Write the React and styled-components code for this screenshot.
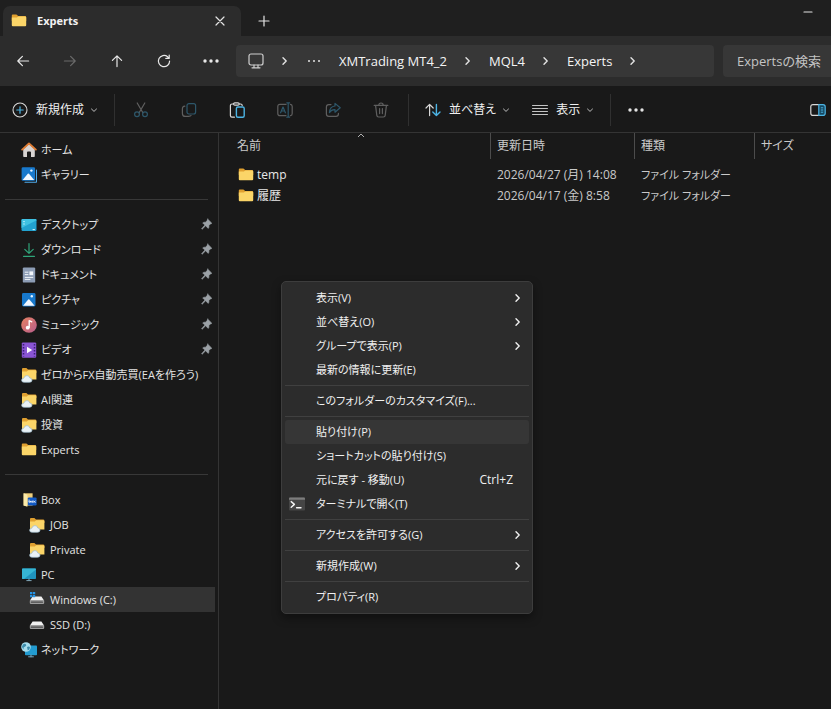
import { useState } from "react";
import styled, { createGlobalStyle, css } from "styled-components";

const GlobalStyle = createGlobalStyle`
  body {
    margin: 0;
    background-color: #191919;
    overflow: hidden;
  }
  button,
  input,
  table {
    font: inherit;
    color: inherit;
  }
`;

const Window = styled.div`
  position: relative;
  display: flex;
  flex-direction: column;
  min-height: 100vh;
  background-color: #191919;
  color: #e4e4e4;
  font-family: "Open Sans", "Noto Sans CJK JP", sans-serif;
  font-size: 12px;
  line-height: 16px;
  font-feature-settings: "palt";
`;

const PlainButton = styled.button`
  display: flex;
  align-items: center;
  justify-content: center;
  padding: 0;
  border: none;
  background: none;
  cursor: pointer;
  white-space: nowrap;
`;

/* Title bar */

const TitleBar = styled.header`
  display: flex;
  align-items: flex-end;
  height: 36px;
  padding-left: 3px;
  background-color: #1f1f1f;
`;

const Tab = styled.div`
  display: flex;
  align-items: center;
  width: 238px;
  height: 30px;
  padding: 0 13px 0 8px;
  box-sizing: border-box;
  border-radius: 7px 7px 0 0;
  background-color: #2c2c2c;
`;

const TabTitle = styled.span`
  flex: 1;
  padding-left: 10px;
  font-size: 11px;
  font-weight: 700;
  color: #f2f2f2;
`;

const NewTabButton = styled(PlainButton)`
  width: 46px;
  height: 30px;
`;

const MinimizeButton = styled(PlainButton)`
  width: 46px;
  height: 24px;
  margin-left: auto;
  align-self: flex-start;
`;

/* Navigation row */

const NavBar = styled.nav`
  display: flex;
  align-items: center;
  gap: 2px;
  height: 50px;
  background-color: #2c2c2c;
`;

const NavButton = styled(PlainButton)`
  flex: none;
  width: 45px;
  height: 32px;
  color: ${(props) => (props.disabled ? "#6a6a6a" : "#e8e8e8")};
`;

const AddressBar = styled.div`
  flex: 1;
  display: flex;
  align-items: center;
  gap: 17px;
  height: 32px;
  margin-left: 1px;
  padding-left: 12px;
  border-radius: 4px;
  background-color: #373737;
`;

const Crumb = styled.a`
  font-size: 13px;
  color: #f4f4f4;
  text-decoration: none;
  white-space: nowrap;
`;

const SearchBox = styled.input`
  flex: none;
  width: 108px;
  height: 32px;
  margin-left: 7px;
  padding: 0 0 0 14px;
  box-sizing: border-box;
  border: none;
  border-radius: 4px 0 0 4px;
  background-color: #373737;
  font-size: 13px;
  outline: none;
  &::placeholder {
    color: #c4c4c4;
    opacity: 1;
  }
`;

/* Command bar */

const CommandBar = styled.div`
  display: flex;
  align-items: center;
  height: 44px;
  padding: 2px 5px 0 12px;
  border-bottom: 1px solid #343434;
`;

const Command = styled(PlainButton)`
  gap: 6px;
  height: 32px;
  margin-right: ${(props) => (props.$last ? "16px" : "22px")};
  color: #f0f0f0;
  svg:first-child {
    margin-right: 2px;
  }
`;

const Tools = styled.div`
  display: flex;
  margin: 0 3px 0 2px;
`;

const ToolButton = styled(PlainButton)`
  width: 48px;
  height: 32px;
  opacity: ${(props) => (props.disabled ? 0.4 : 1)};
`;

const Divider = styled.span`
  width: 1px;
  height: 32px;
  background-color: #303030;
  ${(props) => props.$wide && "margin-right: 16px;"}
`;

const DetailsButton = styled(PlainButton)`
  margin-left: auto;
`;

/* Body */

const Body = styled.div`
  flex: 1;
  display: flex;
`;

const Sidebar = styled.aside`
  flex: none;
  width: 219px;
  padding-top: 4px;
  box-sizing: border-box;
  border-right: 1px solid #343434;
  font-size: 11px;
`;

const SidebarItem = styled.a`
  display: flex;
  align-items: center;
  gap: 4px;
  height: 25px;
  margin-right: 3px;
  padding: 0 2px 0 ${(props) => (props.$nested ? "29px" : "21px")};
  color: inherit;
  text-decoration: none;
  white-space: nowrap;
  ${(props) =>
    props.$nested &&
    css`
      gap: 5px;
    `}
  ${(props) => props.$selected && "background-color: #333333;"}
  svg {
    flex: none;
  }
`;

const ItemLabel = styled.span`
  flex: 1;
`;

const SidebarRule = styled.hr`
  height: 1px;
  margin: 12px 10px 12px 5px;
  border: none;
  background-color: #383838;
`;

const FilePane = styled.main`
  flex: 1;
  min-width: 0;
  padding-left: 13px;
`;

const FileTable = styled.table`
  width: 100%;
  table-layout: fixed;
  border-collapse: collapse;
  th,
  td {
    padding: 0;
    text-align: left;
    font-weight: 400;
    white-space: nowrap;
  }
`;

const Column = styled.col`
  width: ${(props) => props.$width};
`;

const HeadLabel = styled.div`
  position: relative;
  height: 26px;
  margin-bottom: 5px;
  padding-left: ${(props) => (props.$first ? "5px" : "6px")};
  line-height: 25px;
  color: #c9c9c9;
  ${(props) => !props.$first && "border-left: 1px solid #4c4c4c;"}
`;

const SortMark = styled.svg`
  position: absolute;
  top: 0;
  left: 50%;
  margin-left: -4px;
`;

const FileCell = styled.td`
  height: 21px;
  color: #c9c9c9;
  font-size: ${(props) => (props.$small ? "11px" : "12px")};
  && {
    padding-left: 7px;
  }
`;

const FileLink = styled.a`
  display: flex;
  align-items: center;
  gap: 3px;
  margin-left: -1px;
  color: #e8e8e8;
  text-decoration: none;
`;

/* Context menu */

const Menu = styled.div`
  position: absolute;
  top: 281px;
  left: 281px;
  width: 252px;
  padding: 4px 3px;
  box-sizing: border-box;
  border: 1px solid #3d3d3d;
  border-radius: 5px;
  background-color: #2c2c2c;
  box-shadow: 0 4px 10px rgba(0, 0, 0, 0.4);
`;

const MenuItem = styled(PlainButton)`
  justify-content: flex-start;
  width: 100%;
  height: 24px;
  padding: 0 7px 0 4px;
  border-radius: 3px;
  font-size: 11px;
  color: #f0f0f0;
  ${(props) => props.$active && "background-color: #363636;"}
`;

const MenuIcon = styled.span`
  display: flex;
  width: 27px;
`;

const Shortcut = styled.span`
  margin-left: auto;
  padding-right: 9px;
  font-size: 12px;
`;

const MenuArrow = styled.span`
  display: flex;
  margin-left: auto;
`;

const MenuRule = styled.hr`
  height: 1px;
  margin: 3px 0;
  border: none;
  background-color: #404040;
`;

/* Icons */

function Icon({ size = 16, width = size, height = size, box, children }) {
  return (
    <svg
      width={width}
      height={height}
      viewBox={box || `0 0 ${width} ${height}`}
      fill="none"
      stroke="currentColor"
      strokeWidth="1.2"
      strokeLinecap="round"
      strokeLinejoin="round"
      aria-hidden="true"
    >
      {children}
    </svg>
  );
}

const ChevronRight = () => (
  <Icon width={8} height={10}>
    <path d="M2 1.8 5.2 5 2 8.2" strokeWidth="1.4" />
  </Icon>
);

const ChevronDown = () => (
  <Icon width={8} height={8}>
    <path d="M1.5 3 4 5.4 6.5 3" strokeWidth="1" stroke="#bdbdbd" />
  </Icon>
);

const Dots = ({ r = 1.7, step = 6, size = 18 }) => (
  <Icon width={size} height={8}>
    <g fill="currentColor" stroke="none">
      <circle cx={size / 2 - step} cy="4" r={r} />
      <circle cx={size / 2} cy="4" r={r} />
      <circle cx={size / 2 + step} cy="4" r={r} />
    </g>
  </Icon>
);

const FolderIcon = () => (
  <Icon>
    <g stroke="none">
      <path d="M.8 2.4Q.8 1.4 1.8 1.4H5.4L7.2 3H14Q15.2 3 15.2 4.2V8H.8Z" fill="#e0a030" />
      <path d="M.8 4.6H5.8L7.4 3.6H14.2Q15.2 3.6 15.2 4.6V12.2Q15.2 13.2 14.2 13.2H1.8Q.8 13.2.8 12.2Z" fill="#fbd568" />
    </g>
  </Icon>
);

const CloudFolderIcon = () => (
  <Icon>
    <g stroke="none">
      <path d="M1 2Q1 1 2 1H5.4L7 2.6H14Q15.4 2.6 15.4 3.8V6H1Z" fill="#e0a030" />
      <path d="M1 4.4H5.8L7.2 3.2H14.4Q15.4 3.2 15.4 4.2V12.4H1Z" fill="#fbd568" />
    </g>
    <path
      d="M2.8 15.3Q.6 15.3.6 13.3T2.8 11.2Q3.4 8.6 6 8.6 8.2 8.6 8.8 11 11 11 11 13.2 11 15.3 8.8 15.3Z"
      fill="#e9f1f6"
      stroke="#9dbacb"
      strokeWidth="0.7"
    />
  </Icon>
);

const HomeIcon = () => (
  <Icon>
    <path d="M2.2 7.2 8 2 13.8 7.2V14.2Q13.8 15 13 15H10V10.6Q10 9.6 9 9.6H7Q6 9.6 6 10.6V15H3Q2.2 15 2.2 14.2Z" fill="#d8d4d2" stroke="none" />
    <path d="M1.2 7.6 8 1.4 14.8 7.6" stroke="#e07c32" strokeWidth="1.9" />
  </Icon>
);

const Photo = () => (
  <>
    <rect x="1" y="1" width="13.5" height="13.5" rx="1.4" fill="#1879cc" stroke="none" />
    <path d="M2 13.7 7.2 7.5Q7.8 7 8.4 7.5L13.6 13.7Z" fill="#f2f8ff" stroke="none" />
    <circle cx="10.8" cy="4.3" r="1.2" fill="#e6f4ff" stroke="none" />
  </>
);

const GalleryIcon = () => (
  <Icon>
    <path d="M4 15.3H14.6Q15.5 15.3 15.5 14.4V3" stroke="#4fa9e8" strokeWidth="1.1" />
    <g transform="translate(-.4 -.7)">
      <Photo />
    </g>
  </Icon>
);

const PictureIcon = () => (
  <Icon>
    <Photo />
  </Icon>
);

const DesktopIcon = () => (
  <Icon>
    <rect x=".5" y="2" width="15" height="12" rx="1.2" fill="#22a2cf" stroke="none" />
    <path d="M.5 3.2Q.5 2 1.7 2H14.3Q15.5 2 15.5 3.2L.5 11Z" fill="#3fc1e2" stroke="none" />
    <path d="M2.7 4.6H3.3M2.7 7H3.3M12 12.6H13.5" stroke="#d6f6ff" strokeWidth="1" />
  </Icon>
);

const DownloadIcon = () => (
  <Icon>
    <path d="M8 1.5V11M3.8 7.4 8 11.4 12.2 7.4M2.6 14.4H13.4" stroke="#2fa57a" strokeWidth="1.2" />
  </Icon>
);

const DocumentIcon = () => (
  <Icon>
    <rect x="1.8" y=".4" width="12.4" height="15.2" rx="1.2" fill="#8d9db5" stroke="none" />
    <path d="M4.2 5.2H7M4.2 7.6H7M4.2 10.4H11.8M4.2 12.4H9" stroke="#f1f5fa" strokeWidth="1" />
    <rect x="8.4" y="4.4" width="3.8" height="3.8" fill="#f1f5fa" stroke="none" />
  </Icon>
);

const MusicIcon = () => (
  <Icon>
    <defs>
      <linearGradient id="music" x1="0" y1="0" x2="1" y2="1">
        <stop offset="0" stopColor="#e88262" />
        <stop offset="1" stopColor="#b65d8c" />
      </linearGradient>
    </defs>
    <circle cx="8" cy="8" r="7.8" fill="url(#music)" stroke="none" />
    <path d="M8.2 10.6V3.6L10.8 4.8" stroke="#fff" strokeWidth="1.4" />
    <circle cx="6.7" cy="10.7" r="1.9" fill="#fff" stroke="none" />
  </Icon>
);

const VideoIcon = () => (
  <Icon>
    <rect x=".8" y=".4" width="14.4" height="15.4" rx="1.2" fill="#8a55d4" stroke="none" />
    <path d="M2.5 2V14.6M13.5 2V14.6" stroke="#3c1e78" strokeWidth="1.5" strokeDasharray="1.4 1.6" strokeLinecap="butt" />
    <path d="M6 4.8 11.2 8 6 11.2Z" fill="#fff" stroke="none" />
  </Icon>
);

const BoxIcon = () => (
  <Icon>
    <path d="M2.6 1.3H11.6V13.6H2.6Z" fill="#efcf7a" stroke="none" />
    <path d="M2.6 1.3 6.4 2.8V14.8L2.6 13.4Z" fill="#fbe9a8" stroke="none" />
    <rect x="6.8" y="5.4" width="8.8" height="8" rx="1.2" fill="#1159c4" stroke="none" />
    <g stroke="#fff" strokeWidth=".7">
      <path d="M8 7.8V10" />
      <circle cx="8.9" cy="9.7" r=".8" />
      <circle cx="11.2" cy="9.7" r=".8" />
      <path d="M12.9 8.9 14.3 10.5M14.3 8.9 12.9 10.5" />
    </g>
  </Icon>
);

const PcIcon = () => (
  <Icon>
    <rect x="1" y="1.6" width="14" height="10.4" rx=".8" fill="#1f93bd" stroke="none" />
    <path d="M1 2.4Q1 1.6 1.8 1.6H14.2Q15 1.6 15 2.4L3 12H1.8Q1 12 1 11.2Z" fill="#36b5d4" stroke="none" />
    <path d="M8 12V13.6M5.8 13.6H10.2" stroke="#7fa6b8" strokeWidth="1" />
  </Icon>
);

const Drive = () => (
  <>
    <path d="M3.6 4.6H12.4L15.2 8.8H.8Z" fill="#f0f0f0" stroke="none" />
    <rect x=".8" y="8" width="14.4" height="4" rx="1" fill="#9d9d9d" stroke="none" />
    <path d="M2.4 10.2H13.4" stroke="#4a4a4a" strokeWidth="1.2" />
  </>
);

const DriveIcon = () => (
  <Icon>
    <Drive />
  </Icon>
);

const WindowsDriveIcon = () => (
  <Icon>
    <Drive />
    <path d="M1 0H3.3V2.3H1ZM3.9 0H6.2V2.3H3.9ZM1 2.9H3.3V5.2H1ZM3.9 2.9H6.2V5.2H3.9Z" fill="#2795e6" stroke="none" />
  </Icon>
);

const NetworkIcon = () => (
  <Icon>
    <rect x="4" y="3.4" width="12" height="9.8" rx=".8" fill="#229bd0" stroke="none" />
    <path d="M10 13V14.8M7.6 14.8H12.4" stroke="#78a7be" strokeWidth="1" />
    <circle cx="5" cy="5" r="4.8" fill="#a6dcec" stroke="none" />
    <path d="M2 2.4Q4 1.2 5 2.6T3.8 4.8 3.2 7.4Q.8 6 1 4.4ZM6 5Q8.4 4 9 5.4 8.6 7.6 6.8 8.6Z" fill="#3c8cab" stroke="none" />
  </Icon>
);

const PinIcon = () => (
  <Icon width={13} height={13}>
    <path
      d="M7.8 1.2 11.8 5.2Q11.4 6 10.4 5.9L8.9 7.5Q9.2 9.6 8.2 10.4L5.6 7.8 2.2 11.2 1.6 10.8 4.9 7.1 2.7 4.9Q3.6 3.9 5.6 4.2L7.1 2.6Q7 1.6 7.8 1.2Z"
      fill="#9ba1a6"
      stroke="#9ba1a6"
      strokeWidth=".6"
    />
  </Icon>
);

const PlusCircleIcon = () => (
  <Icon>
    <circle cx="8" cy="8" r="7" stroke="#d8d8d8" strokeWidth="1.1" />
    <path d="M8 4.8V11.2M4.8 8H11.2" stroke="#4cb4e4" />
  </Icon>
);

const CutIcon = () => (
  <Icon>
    <path d="M4.2 1 9.9 10.8M11.8 1 6.1 10.8" stroke="#c9c9c9" />
    <circle cx="4" cy="12.2" r="2.4" stroke="#4cb4e4" />
    <circle cx="12" cy="12.2" r="2.4" stroke="#4cb4e4" />
  </Icon>
);

const CopyIcon = () => (
  <Icon>
    <rect x="6" y="1.6" width="8.6" height="10.4" rx="2" stroke="#4cb4e4" />
    <path d="M3.8 4.2Q1.4 4.4 1.4 6.8V11.4Q1.4 14.4 4.4 14.4H7.6Q9.6 14.4 10 13.6" stroke="#c9c9c9" />
  </Icon>
);

const PasteIcon = () => (
  <Icon>
    <path d="M4.4 2H3Q1.4 2 1.4 3.6V13.6Q1.4 15.2 3 15.2H5.4M10.4 2H11.6Q13.2 2 13.2 3.6" stroke="#d8d8d8" />
    <rect x="4.6" y=".8" width="5.6" height="2.4" rx="1.2" stroke="#d8d8d8" />
    <rect x="7.4" y="5" width="7.8" height="10.2" rx="1.5" stroke="#4cb4e4" strokeWidth="1.4" />
  </Icon>
);

const RenameIcon = () => (
  <Icon>
    <path d="M9 2.4H3Q.8 2.4.8 4.6V11.4Q.8 13.6 3 13.6H9M13.4 2.4Q15.2 2.6 15.2 4.6V11.4Q15.2 13.4 13.4 13.6" stroke="#c9c9c9" />
    <path d="M3.6 10.8 6 5 8.4 10.8M4.4 9H7.6M11.2 1V15M9.8.8H12.6M9.8 15.2H12.6" stroke="#4cb4e4" />
  </Icon>
);

const ShareIcon = () => (
  <Icon>
    <path d="M6 2.6H3.8Q1.4 2.6 1.4 5V12Q1.4 14.4 3.8 14.4H11Q13.4 14.4 13.4 12V11.4" stroke="#c9c9c9" />
    <path d="M10 1.4 15.2 5.8 10 10.2V7.6Q6.4 7.4 4.4 10.6 4.8 4.6 10 4Z" stroke="#4cb4e4" />
  </Icon>
);

const TrashIcon = () => (
  <Icon>
    <path d="M1.2 3.4H14.8M5.8 3.2Q5.8 1 8 1T10.2 3.2M2.6 3.6 3.8 13.4Q4 15 5.6 15H10.4Q12 15 12.2 13.4L13.4 3.6M6.6 6.6V11.6M9.4 6.6V11.6" stroke="#c9c9c9" />
  </Icon>
);

const SortIcon = () => (
  <Icon>
    <path d="M4.6 13.6V2.4M1 6 4.6 2.4 8.2 6" stroke="#d8d8d8" />
    <path d="M11.4 2.4V13.6M7.8 10 11.4 13.6 15 10" stroke="#4cb4e4" strokeWidth="1.4" />
  </Icon>
);

const ViewIcon = () => (
  <Icon>
    <path d="M.5 3.5H15.5M.5 6.5H15.5M.5 9.5H15.5M.5 12.5H15.5" stroke="#c4c4c4" strokeWidth="1" />
  </Icon>
);

const DetailsIcon = () => (
  <Icon>
    <path d="M8.6 2.6H3Q.8 2.6.8 4.8V11.2Q.8 13.4 3 13.4H8.6" stroke="#d8d8d8" />
    <path d="M8.8 2.6H13Q15.2 2.6 15.2 4.8V11.2Q15.2 13.4 13 13.4H8.8Z" fill="#164860" stroke="#4cb4e4" />
    <path d="M11.2 5.8H12.8M11.2 8H12.8M11.2 10.2H12.8" stroke="#4cb4e4" strokeWidth="1" />
  </Icon>
);

const MonitorIcon = () => (
  <Icon>
    <rect x="1" y="1" width="14" height="11" rx="2" stroke="#cfcfcf" />
    <path d="M6 12.2V14.4M10 12.2V14.4M4 14.8H12" stroke="#cfcfcf" />
  </Icon>
);

const TerminalIcon = () => (
  <Icon>
    <rect x="0" y="1.5" width="16" height="13" rx="1" fill="#454545" stroke="none" />
    <path d="M0 2.5Q0 1.5 1 1.5H15Q16 1.5 16 2.5V3.8H0Z" fill="#7d7d7d" stroke="none" />
    <path d="M2.2 5.6 5.4 8.4 2.2 11.2M7.6 11.8H12" stroke="#f4f4f4" strokeWidth="1.4" />
  </Icon>
);

const libraryLinks = [
  { label: "ホーム", icon: HomeIcon },
  { label: "ギャラリー", icon: GalleryIcon },
];

const quickLinks = [
  { label: "デスクトップ", icon: DesktopIcon, pinned: true },
  { label: "ダウンロード", icon: DownloadIcon, pinned: true },
  { label: "ドキュメント", icon: DocumentIcon, pinned: true },
  { label: "ピクチャ", icon: PictureIcon, pinned: true },
  { label: "ミュージック", icon: MusicIcon, pinned: true },
  { label: "ビデオ", icon: VideoIcon, pinned: true },
  { label: "ゼロからFX自動売買(EAを作ろう)", icon: CloudFolderIcon },
  { label: "AI関連", icon: CloudFolderIcon },
  { label: "投資", icon: CloudFolderIcon },
  { label: "Experts", icon: FolderIcon },
];

const deviceLinks = [
  { label: "Box", icon: BoxIcon },
  { label: "JOB", icon: CloudFolderIcon, nested: true },
  { label: "Private", icon: CloudFolderIcon, nested: true },
  { label: "PC", icon: PcIcon },
  { label: "Windows (C:)", icon: WindowsDriveIcon, nested: true },
  { label: "SSD (D:)", icon: DriveIcon, nested: true },
  { label: "ネットワーク", icon: NetworkIcon },
];

const files = [
  { name: "temp", date: "2026/04/27 (月) 14:08", type: "ファイル フォルダー" },
  { name: "履歴", date: "2026/04/17 (金) 8:58", type: "ファイル フォルダー" },
];

const menuGroups = [
  [
    { label: "表示(V)", submenu: true },
    { label: "並べ替え(O)", submenu: true },
    { label: "グループで表示(P)", submenu: true },
    { label: "最新の情報に更新(E)" },
  ],
  [{ label: "このフォルダーのカスタマイズ(F)..." }],
  [
    { label: "貼り付け(P)" },
    { label: "ショートカットの貼り付け(S)" },
    { label: "元に戻す - 移動(U)", shortcut: "Ctrl+Z" },
    { label: "ターミナルで開く(T)", icon: TerminalIcon },
  ],
  [{ label: "アクセスを許可する(G)", submenu: true }],
  [{ label: "新規作成(W)", submenu: true }],
  [{ label: "プロパティ(R)" }],
];

function SidebarLinks({ links, selected, onSelect }) {
  return links.map(({ label, icon: ItemIcon, pinned, nested }) => (
    <SidebarItem
      key={label}
      href="#"
      $nested={nested}
      $selected={selected === label}
      onClick={() => onSelect(label)}
    >
      <ItemIcon />
      <ItemLabel>{label}</ItemLabel>
      {pinned && <PinIcon />}
    </SidebarItem>
  ));
}

function ContextMenu() {
  const [active, setActive] = useState("貼り付け(P)");
  return (
    <Menu role="menu">
      {menuGroups.map((group, index) => (
        <div key={group[0].label} role="group">
          {index > 0 && <MenuRule />}
          {group.map(({ label, icon: ItemIcon, shortcut, submenu }) => (
            <MenuItem
              key={label}
              role="menuitem"
              $active={active === label}
              onMouseEnter={() => setActive(label)}
            >
              <MenuIcon>{ItemIcon && <ItemIcon />}</MenuIcon>
              {label}
              {shortcut && <Shortcut>{shortcut}</Shortcut>}
              {submenu && (
                <MenuArrow>
                  <ChevronRight />
                </MenuArrow>
              )}
            </MenuItem>
          ))}
        </div>
      ))}
    </Menu>
  );
}

function App() {
  const [selected, setSelected] = useState("Windows (C:)");
  return (
    <>
      <GlobalStyle />
      <Window>
        <TitleBar>
          <Tab>
            <FolderIcon />
            <TabTitle>Experts</TabTitle>
            <PlainButton aria-label="タブを閉じる">
              <Icon>
                <path d="M4 4 12 12M12 4 4 12" />
              </Icon>
            </PlainButton>
          </Tab>
          <NewTabButton aria-label="新しいタブ">
            <Icon size={12}>
              <path d="M6 1V11M1 6H11" />
            </Icon>
          </NewTabButton>
          <MinimizeButton aria-label="最小化">
            <Icon size={10}>
              <path d="M1 5H9" />
            </Icon>
          </MinimizeButton>
        </TitleBar>

        <NavBar>
          <NavButton aria-label="戻る">
            <Icon size={14}>
              <path d="M12.6 7H1.8M6.4 2.4 1.8 7 6.4 11.6" />
            </Icon>
          </NavButton>
          <NavButton aria-label="進む" disabled>
            <Icon size={14}>
              <path d="M1.4 7H12.2M7.6 2.4 12.2 7 7.6 11.6" />
            </Icon>
          </NavButton>
          <NavButton aria-label="上へ">
            <Icon size={14}>
              <path d="M7 12.6V1.8M2.4 6.4 7 1.8 11.6 6.4" />
            </Icon>
          </NavButton>
          <NavButton aria-label="最新の情報に更新">
            <Icon size={14}>
              <path d="M12.6 7A5.6 5.6 0 1 1 10.6 2.8L12 4.2M12.2 1V4.4H8.8" />
            </Icon>
          </NavButton>
          <NavButton aria-label="その他">
            <Dots />
          </NavButton>
          <AddressBar>
            <MonitorIcon />
            <ChevronRight />
            <Dots r={1} step={5} size={16} />
            <Crumb href="#">XMTrading MT4_2</Crumb>
            <ChevronRight />
            <Crumb href="#">MQL4</Crumb>
            <ChevronRight />
            <Crumb href="#">Experts</Crumb>
            <ChevronRight />
          </AddressBar>
          <SearchBox aria-label="検索" placeholder="Expertsの検索" />
        </NavBar>

        <CommandBar>
          <Command $last>
            <PlusCircleIcon />
            新規作成
            <ChevronDown />
          </Command>
          <Divider />
          <Tools>
            <ToolButton aria-label="切り取り" disabled>
              <CutIcon />
            </ToolButton>
            <ToolButton aria-label="コピー" disabled>
              <CopyIcon />
            </ToolButton>
            <ToolButton aria-label="貼り付け">
              <PasteIcon />
            </ToolButton>
            <ToolButton aria-label="名前の変更" disabled>
              <RenameIcon />
            </ToolButton>
            <ToolButton aria-label="共有" disabled>
              <ShareIcon />
            </ToolButton>
            <ToolButton aria-label="削除" disabled>
              <TrashIcon />
            </ToolButton>
          </Tools>
          <Divider $wide />
          <Command>
            <SortIcon />
            並べ替え
            <ChevronDown />
          </Command>
          <Command $last>
            <ViewIcon />
            表示
            <ChevronDown />
          </Command>
          <Divider $wide />
          <PlainButton aria-label="もっと見る">
            <Dots />
          </PlainButton>
          <DetailsButton aria-label="詳細ウィンドウ">
            <DetailsIcon />
          </DetailsButton>
        </CommandBar>

        <Body>
          <Sidebar>
            <SidebarLinks links={libraryLinks} selected={selected} onSelect={setSelected} />
            <SidebarRule />
            <SidebarLinks links={quickLinks} selected={selected} onSelect={setSelected} />
            <SidebarRule />
            <SidebarLinks links={deviceLinks} selected={selected} onSelect={setSelected} />
          </Sidebar>

          <FilePane>
            <FileTable>
              <colgroup>
                <Column $width="258px" />
                <Column $width="144px" />
                <Column $width="120px" />
                <Column $width="auto" />
              </colgroup>
              <thead>
                <tr>
                  <th scope="col">
                    <HeadLabel $first>
                      名前
                      <SortMark width="8" height="5" viewBox="0 0 8 5" fill="none" stroke="#b0b0b0">
                        <path d="M1 4 4 1 7 4" />
                      </SortMark>
                    </HeadLabel>
                  </th>
                  <th scope="col">
                    <HeadLabel>更新日時</HeadLabel>
                  </th>
                  <th scope="col">
                    <HeadLabel>種類</HeadLabel>
                  </th>
                  <th scope="col">
                    <HeadLabel>サイズ</HeadLabel>
                  </th>
                </tr>
              </thead>
              <tbody>
                {files.map((file) => (
                  <tr key={file.name}>
                    <FileCell>
                      <FileLink href="#">
                        <FolderIcon />
                        {file.name}
                      </FileLink>
                    </FileCell>
                    <FileCell>{file.date}</FileCell>
                    <FileCell $small>{file.type}</FileCell>
                    <FileCell />
                  </tr>
                ))}
              </tbody>
            </FileTable>
          </FilePane>
        </Body>

        <ContextMenu />
      </Window>
    </>
  );
}

export default App;
